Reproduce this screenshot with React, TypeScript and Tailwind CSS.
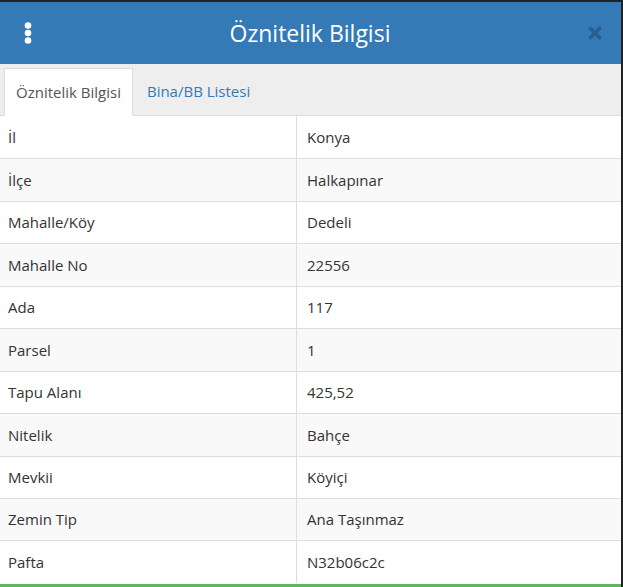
import { X } from 'lucide-react'

const rows: [string, string][] = [
  ['İl', 'Konya'],
  ['İlçe', 'Halkapınar'],
  ['Mahalle/Köy', 'Dedeli'],
  ['Mahalle No', '22556'],
  ['Ada', '117'],
  ['Parsel', '1'],
  ['Tapu Alanı', '425,52'],
  ['Nitelik', 'Bahçe'],
  ['Mevkii', 'Köyiçi'],
  ['Zemin Tip', 'Ana Taşınmaz'],
  ['Pafta', 'N32b06c2c'],
]

export default function App() {
  return (
    <div className="w-[623px] h-[587px] overflow-hidden bg-[#222] pt-[2px] pr-[2px]" style={{ fontFamily: '"Open Sans", "Noto Sans", sans-serif' }}>
      <div className="h-full bg-white flex flex-col">
        {/* header */}
        <div className="h-[62px] bg-[#337ab7] flex items-center pl-[22px] pr-[17px] shrink-0">
          <svg width="12" height="24" viewBox="0 0 12 24" className="text-white">
            <circle cx="6" cy="4.5" r="3.3" fill="currentColor" />
            <circle cx="6" cy="12" r="3.3" fill="currentColor" />
            <circle cx="6" cy="19.5" r="3.3" fill="currentColor" />
          </svg>
          <div className="flex-1 text-center text-white text-[23px]">Öznitelik Bilgisi</div>
          <X size={18} strokeWidth={5} className="text-[#2a5f91]" />
        </div>

        {/* tabs */}
        <div className="h-[52px] bg-[#eee] flex items-end pl-[4px] border-b border-[#ddd] shrink-0">
          <div className="h-[48px] -mb-px px-[11px] flex items-center bg-white border border-[#ddd] border-b-white text-[15px] text-[#555]">
            Öznitelik Bilgisi
          </div>
          <div className="h-[48px] px-[14px] flex items-center text-[15px] text-[#337ab7]">Bina/BB Listesi</div>
        </div>

        {/* table */}
        <div className="flex-1 flex flex-col text-[15px] text-[#333]">
          {rows.map(([k, v], i) => (
            <div
              key={k}
              className={`grid grid-cols-[297px_1fr] h-[42.45px] border-t border-[#ddd] first:border-t-0 ${i % 2 === 1 ? 'bg-[#f9f9f9]' : 'bg-white'}`}
            >
              <div className="px-[8px] flex items-center border-r border-[#ddd]">{k}</div>
              <div className="px-[10px] flex items-center">{v}</div>
            </div>
          ))}
          <div className="flex-1" />
        </div>
        <div className="h-[3px] bg-[#5cb85c] shrink-0" />
      </div>
    </div>
  )
}
